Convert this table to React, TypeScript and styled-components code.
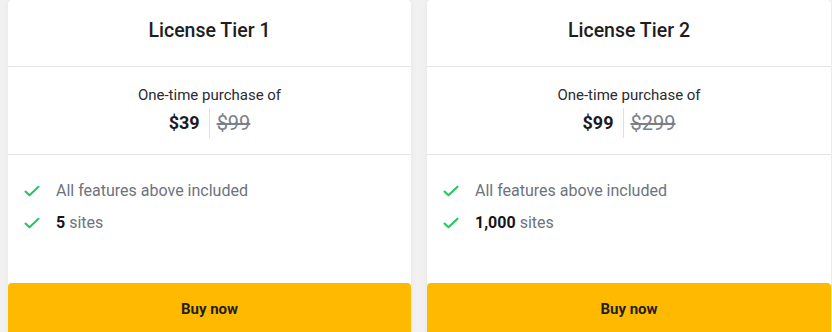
import React from "react";
import styled, { createGlobalStyle } from "styled-components";

const Global = createGlobalStyle`
  html, body { margin: 0; padding: 0; }
  body {
    background: #f1f1f1;
    font-family: Roboto, "Liberation Sans", Arial, sans-serif;
    height: 332px;
    overflow: hidden;
  }
`;

const Grid = styled.div`
  display: grid;
  grid-template-columns: 403px 404px;
  column-gap: 16px;
  padding: 0 1px 0 8px;
`;

const Card = styled.div`
  background: #ffffff;
  display: flex;
  flex-direction: column;
  box-shadow: 0 0 6px rgba(0, 0, 0, 0.05);
  border-radius: 4px;
`;

const Header = styled.div`
  padding: 19px 16px 23px;
  border-bottom: 1px solid #e4e4ea;
  text-align: center;
`;

const Title = styled.h2`
  margin: 0;
  font-size: 19.5px;
  line-height: 24px;
  font-weight: 500;
  color: #1d1d22;
`;

const PriceBlock = styled.div`
  padding: 17px 16px 16px;
  border-bottom: 1px solid #e4e4ea;
  display: flex;
  flex-direction: column;
  align-items: center;
  gap: 2px;
`;

const PriceLabel = styled.div`
  font-size: 15px;
  line-height: 22px;
  color: #2a2a30;
`;

const PriceRow = styled.div`
  display: flex;
  align-items: center;
  height: 30px;
`;

const Price = styled.span`
  font-size: 18px;
  font-weight: 700;
  line-height: 30px;
  color: #1b1b1f;
  padding-right: 9px;
`;

const OldPrice = styled.span`
  font-size: 20px;
  line-height: 30px;
  color: #7a7f89;
  text-decoration: line-through;
  border-left: 1px solid #dedfe4;
  padding-left: 7px;
`;

const Features = styled.ul`
  list-style: none;
  margin: 0;
  padding: 24px 16px 0;
  height: 128px;
  box-sizing: border-box;
  display: flex;
  flex-direction: column;
  gap: 8px;
`;

const Feature = styled.li`
  display: flex;
  align-items: center;
  gap: 16px;
  font-size: 16px;
  line-height: 24px;
  color: #6d737e;
`;

const Strong = styled.b`
  font-weight: 700;
  color: #15151a;
`;

const CheckIcon = styled.svg`
  width: 16px;
  height: 16px;
  flex: none;
`;

const BuyButton = styled.button`
  height: 52px;
  border: none;
  border-radius: 4px;
  background: #ffba00;
  color: #1f1f1f;
  font-family: inherit;
  font-size: 15px;
  font-weight: 700;
  cursor: pointer;
`;

const Check = () => (
  <CheckIcon viewBox="0 0 16 16" fill="none">
    <path
      d="M1.5 8.5 L5.5 12.2 L14.5 3.8"
      stroke="#22c55e"
      strokeWidth="2"
      strokeLinecap="round"
      strokeLinejoin="round"
    />
  </CheckIcon>
);

type Tier = { name: string; price: string; old: string; sites: string };

const tiers: Tier[] = [
  { name: "License Tier 1", price: "$39", old: "$99", sites: "5" },
  { name: "License Tier 2", price: "$99", old: "$299", sites: "1,000" },
];

export default function App() {
  return (
    <>
      <Global />
      <Grid>
        {tiers.map((t) => (
          <Card key={t.name}>
            <Header>
              <Title>{t.name}</Title>
            </Header>
            <PriceBlock>
              <PriceLabel>One-time purchase of</PriceLabel>
              <PriceRow>
                <Price>{t.price}</Price>
                <OldPrice>{t.old}</OldPrice>
              </PriceRow>
            </PriceBlock>
            <Features>
              <Feature>
                <Check />
                <span>All features above included</span>
              </Feature>
              <Feature>
                <Check />
                <span>
                  <Strong>{t.sites}</Strong> sites
                </span>
              </Feature>
            </Features>
            <BuyButton>Buy now</BuyButton>
          </Card>
        ))}
      </Grid>
    </>
  );
}
